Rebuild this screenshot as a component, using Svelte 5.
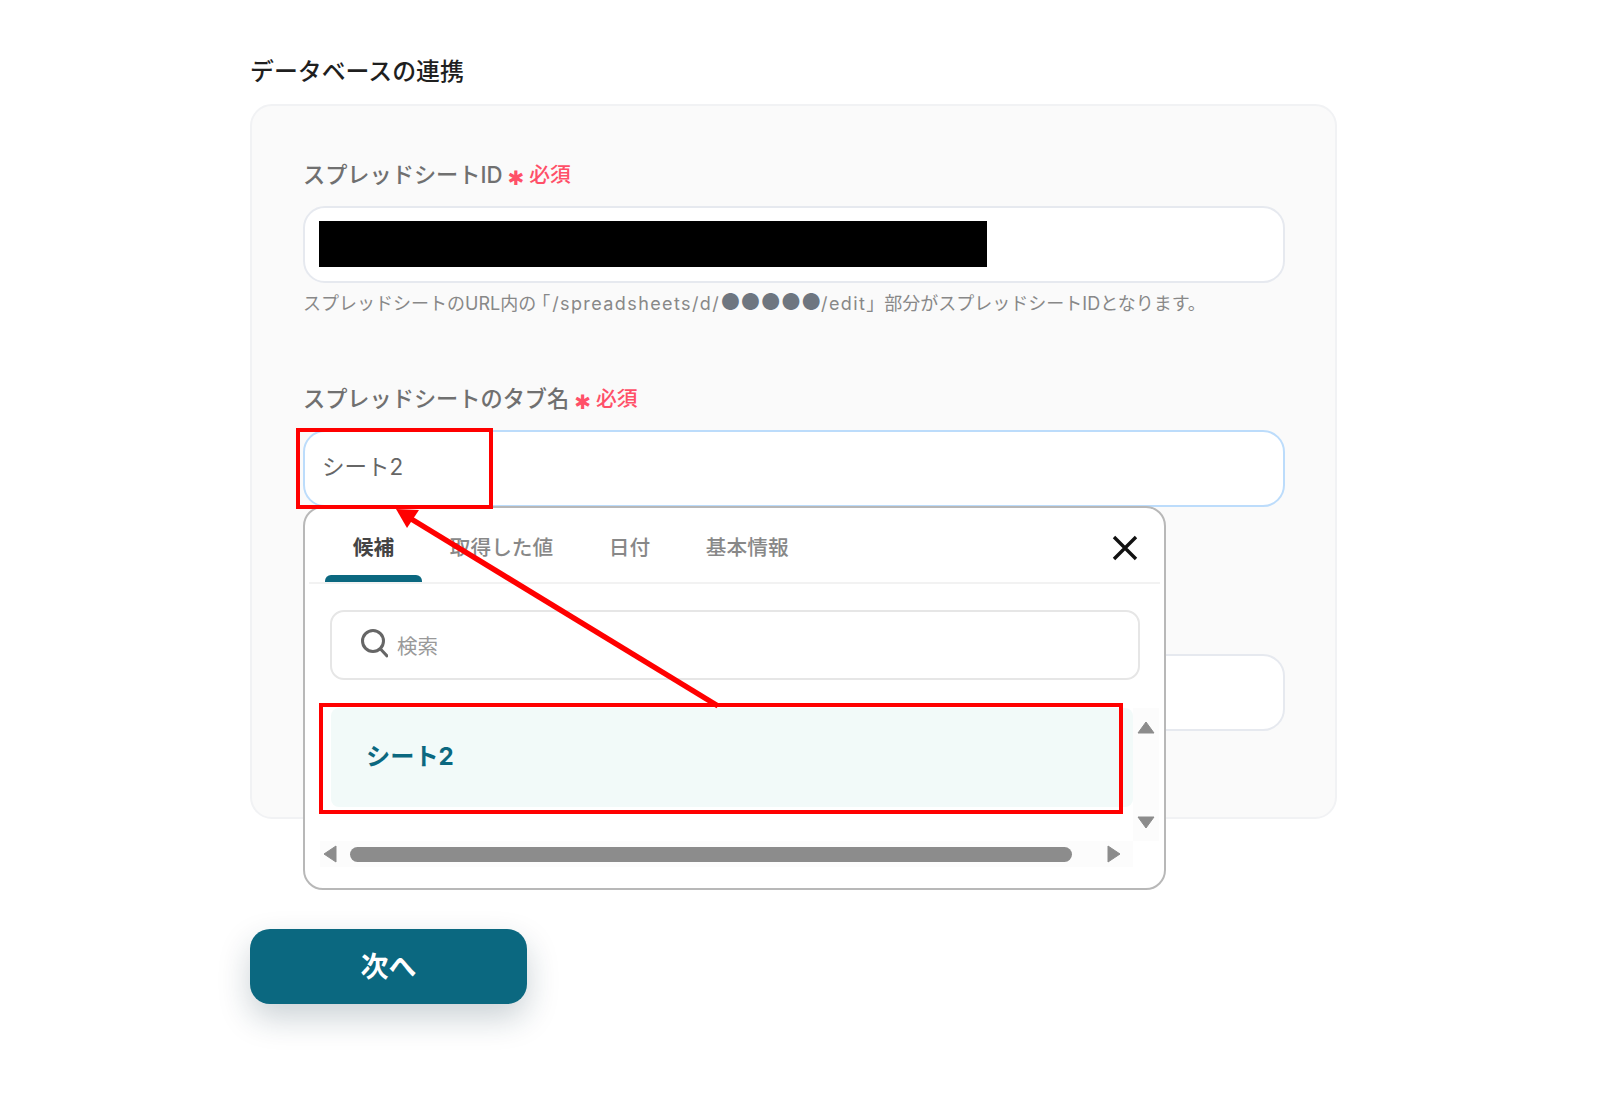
<script>
	const tabs = ["候補", "取得した値", "日付", "基本情報"];
</script>

<div class="page" lang="ja">
	<div class="wrap">
		<h2 class="title">データベースの連携</h2>

		<div class="card">
			<div class="field">
				<div class="label">スプレッドシートID <span class="req"><span class="star">✱</span>必須</span></div>
				<div class="input">
					<div class="redact"></div>
				</div>
				<div class="help">スプレッドシートのURL内の<span class="open">「</span><span class="latin">/spreadsheets/d/</span><span class="dots">●●●●●</span><span class="latin">/edit</span>」部分がスプレッドシートIDとなります。</div>
			</div>

			<div class="field second">
				<div class="label">スプレッドシートのタブ名 <span class="req"><span class="star">✱</span>必須</span></div>
				<div class="input-wrap">
					<div class="input focus">シート2</div>

					<div class="popup">
						<div class="tabs">
							{#each tabs as tab, i}
								<div class="tab" class:active={i === 0}>{tab}</div>
							{/each}
							<svg class="close" width="26" height="26" viewBox="0 0 26 26">
								<path d="M2 2 L24 24 M24 2 L2 24" stroke="#111" stroke-width="3.4" fill="none" />
							</svg>
						</div>

						<div class="search">
							<svg width="28" height="30" viewBox="0 0 28 30">
								<circle cx="13" cy="13" r="10.5" stroke="#666" stroke-width="3" fill="none" />
								<path d="M20.5 21 L27 28" stroke="#666" stroke-width="3" stroke-linecap="round" />
							</svg>
							<span>検索</span>
						</div>

						<div class="scroller">
							<div class="list">
								<div class="item">シート2</div>
							</div>
							<div class="vbar">
								<svg width="18" height="13" viewBox="0 0 18 13"><path d="M9 1 L17 12 H1 Z" fill="#8c8c8c" stroke="#8c8c8c" stroke-linejoin="round" /></svg>
								<svg width="18" height="13" viewBox="0 0 18 13"><path d="M9 12 L17 1 H1 Z" fill="#8c8c8c" stroke="#8c8c8c" stroke-linejoin="round" /></svg>
							</div>
							<div class="hbar">
								<svg width="14" height="18" viewBox="0 0 14 18"><path d="M1 9 L13 1 V17 Z" fill="#8c8c8c" stroke="#8c8c8c" stroke-linejoin="round" /></svg>
								<div class="thumb"></div>
								<svg class="right" width="14" height="18" viewBox="0 0 14 18"><path d="M13 9 L1 1 V17 Z" fill="#8c8c8c" stroke="#8c8c8c" stroke-linejoin="round" /></svg>
							</div>
						</div>
					</div>
				</div>
			</div>

			<div class="field">
				<div class="input"></div>
			</div>
		</div>

		<button class="next">次へ</button>
	</div>

	<!-- annotations drawn over the screenshot -->
	<svg class="marks" width="1600" height="1103" viewBox="0 0 1600 1103">
		<rect x="298" y="430" width="193" height="77" fill="none" stroke="#f00" stroke-width="4" />
		<rect x="321" y="705" width="800" height="107" fill="none" stroke="#f00" stroke-width="4" />
		<path d="M718 706 L408 517" stroke="#f00" stroke-width="5.5" fill="none" />
		<path d="M396 509 L419 510 L407 528 Z" fill="#f00" />
	</svg>
</div>

<style>
	:global(body) {
		background: #fff;
	}
	.page {
		position: relative;
		height: 1103px;
		overflow: hidden;
		font-family: Inter, "Noto Sans CJK JP", sans-serif;
	}
	.wrap {
		width: 1087px;
		margin-left: 250px;
		padding-top: 57px;
	}
	.title {
		margin: 0 0 17px;
		font-size: 23.9px;
		line-height: 30px;
		font-weight: 500;
		color: #1f1f1f;
	}
	.card {
		box-sizing: border-box;
		height: 715px;
		padding: 53px 50px 0 51px;
		background: #fafafa;
		border: 2px solid #f1f2f4;
		border-radius: 22px;
	}
	.field {
		margin-bottom: 66px;
	}
	.field.second {
		margin-bottom: 147px;
	}
	.label {
		box-sizing: border-box;
		display: flex;
		align-items: center;
		gap: 5px;
		height: 30px;
		padding-bottom: 2px;
		margin-bottom: 17px;
		font-size: 22.2px;
		font-weight: 500;
		color: #707070;
		white-space: nowrap;
	}
	.req {
		display: flex;
		align-items: center;
		gap: 5px;
		font-size: 20.8px;
		font-weight: 500;
		color: #ff5068;
	}
	.star {
		font-family: "DejaVu Sans", sans-serif;
		font-size: 20px;
		line-height: 30px;
		padding-top: 9px;
	}
	.input-wrap {
		position: relative;
	}
	.input {
		box-sizing: border-box;
		display: flex;
		align-items: center;
		height: 77px;
		padding: 0 14px 2px;
		background: #fff;
		border: 2px solid #e6e9ef;
		border-radius: 22px;
	}
	.input.focus {
		padding: 0 17px 7px;
		border-color: #bcdcfb;
		font-size: 22.5px;
		color: #666;
	}
	.redact {
		width: 668px;
		height: 46px;
		background: #000;
	}
	.help {
		margin-top: 8px;
		font-size: 18px;
		line-height: 26px;
		color: #888;
		white-space: nowrap;
	}
	.open {
		font-feature-settings: "halt";
		margin: 0 2px 0 5px;
	}
	.latin {
		letter-spacing: 1.4px;
	}
	.dots {
		font-size: 22.3px;
		line-height: 20px;
		color: #6e7680;
		letter-spacing: -0.2px;
	}
	.popup {
		box-sizing: border-box;
		position: absolute;
		z-index: 2;
		top: calc(100% - 1px);
		left: 0;
		width: 863px;
		height: 384px;
		background: #fff;
		border: 2px solid #b8b8b8;
		border-radius: 20px;
	}
	.tabs {
		position: relative;
		display: flex;
		height: 74px;
		margin: 0 4px;
		padding-left: 16px;
		border-bottom: 2px solid #f2f2f2;
	}
	.tab {
		position: relative;
		padding: 25px 27.8px 0;
		font-size: 20.7px;
		line-height: 30px;
		font-weight: 500;
		color: #888;
	}
	.tab.active {
		color: #444;
		font-weight: 700;
	}
	.tab.active::after {
		content: "";
		position: absolute;
		left: 0;
		right: 0;
		bottom: 0;
		height: 7px;
		background: #0b6880;
		border-radius: 6px 6px 0 0;
	}
	.close {
		position: absolute;
		top: 27px;
		right: 22px;
	}
	.search {
		box-sizing: border-box;
		display: flex;
		align-items: center;
		gap: 9px;
		width: 810px;
		height: 70px;
		margin: 26px 0 0 25px;
		padding-left: 28px;
		border: 2px solid #e6e6e6;
		border-radius: 14px;
		font-size: 20.5px;
		color: #999;
	}
	.search svg {
		margin-top: -4px;
	}
	.scroller {
		display: grid;
		grid-template-columns: 813px 26px;
		grid-template-rows: 133px 26px;
		margin: 28px 0 0 15px;
	}
	.list {
		padding-left: 11px;
	}
	.item {
		height: 99px;
		padding-left: 35px;
		background: #f2faf9;
		border-radius: 8px;
		font-size: 24.2px;
		line-height: 98px;
		font-weight: 700;
		color: #0b6880;
	}
	.vbar {
		box-sizing: border-box;
		display: flex;
		flex-direction: column;
		justify-content: space-between;
		align-items: center;
		padding: 13px 0 12px;
		background: #fcfcfc;
	}
	.hbar {
		display: flex;
		align-items: center;
		padding-left: 3px;
		background: #fcfcfc;
	}
	.thumb {
		width: 722px;
		height: 15px;
		margin-left: 13px;
		background: #8c8c8c;
		border-radius: 8px;
	}
	.right {
		margin-left: 35px;
	}
	.next {
		display: block;
		width: 277px;
		height: 75px;
		margin-top: 110px;
		padding: 0 0 4px;
		border: none;
		border-radius: 20px;
		background: #0b6880;
		box-shadow: 0 14px 32px rgba(20, 50, 70, 0.22);
		font-family: inherit;
		font-size: 28px;
		font-weight: 700;
		color: #fff;
	}
	.marks {
		position: absolute;
		z-index: 3;
		top: 0;
		left: 0;
		pointer-events: none;
	}
</style>
